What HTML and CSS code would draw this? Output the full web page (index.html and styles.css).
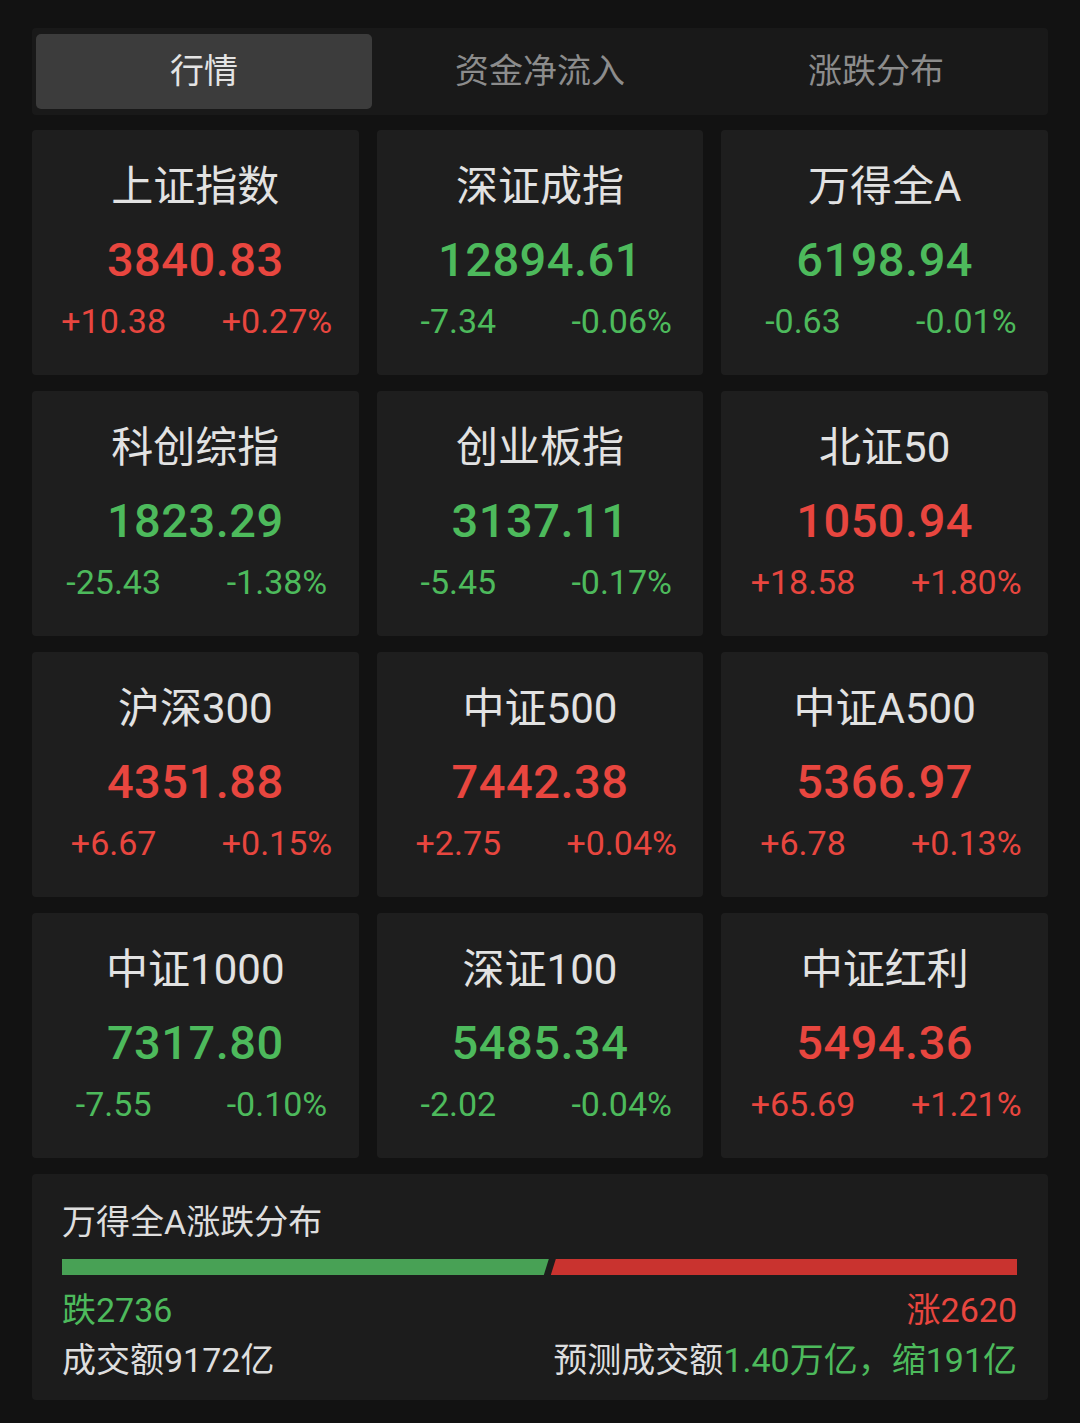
FILE: index.html
```html
<!DOCTYPE html>
<html lang="zh-CN">
<head>
<meta charset="utf-8">
<title>行情</title>
<link rel="stylesheet" href="styles.css">
</head>
<body>
<div class="page">
  <div class="tabs">
    <div class="tab active">行情</div>
    <div class="tab">资金净流入</div>
    <div class="tab">涨跌分布</div>
  </div>

  <div class="grid">
    <div class="card">
      <div class="name">上证指数</div>
      <div class="value up">3840.83</div>
      <div class="chg up"><span>+10.38</span><span>+0.27%</span></div>
    </div>
    <div class="card">
      <div class="name">深证成指</div>
      <div class="value down">12894.61</div>
      <div class="chg down"><span>-7.34</span><span>-0.06%</span></div>
    </div>
    <div class="card">
      <div class="name">万得全A</div>
      <div class="value down">6198.94</div>
      <div class="chg down"><span>-0.63</span><span>-0.01%</span></div>
    </div>

    <div class="card">
      <div class="name">科创综指</div>
      <div class="value down">1823.29</div>
      <div class="chg down"><span>-25.43</span><span>-1.38%</span></div>
    </div>
    <div class="card">
      <div class="name">创业板指</div>
      <div class="value down">3137.11</div>
      <div class="chg down"><span>-5.45</span><span>-0.17%</span></div>
    </div>
    <div class="card">
      <div class="name">北证50</div>
      <div class="value up">1050.94</div>
      <div class="chg up"><span>+18.58</span><span>+1.80%</span></div>
    </div>

    <div class="card">
      <div class="name">沪深300</div>
      <div class="value up">4351.88</div>
      <div class="chg up"><span>+6.67</span><span>+0.15%</span></div>
    </div>
    <div class="card">
      <div class="name">中证500</div>
      <div class="value up">7442.38</div>
      <div class="chg up"><span>+2.75</span><span>+0.04%</span></div>
    </div>
    <div class="card">
      <div class="name">中证A500</div>
      <div class="value up">5366.97</div>
      <div class="chg up"><span>+6.78</span><span>+0.13%</span></div>
    </div>

    <div class="card">
      <div class="name">中证1000</div>
      <div class="value down">7317.80</div>
      <div class="chg down"><span>-7.55</span><span>-0.10%</span></div>
    </div>
    <div class="card">
      <div class="name">深证100</div>
      <div class="value down">5485.34</div>
      <div class="chg down"><span>-2.02</span><span>-0.04%</span></div>
    </div>
    <div class="card">
      <div class="name">中证红利</div>
      <div class="value up">5494.36</div>
      <div class="chg up"><span>+65.69</span><span>+1.21%</span></div>
    </div>
  </div>

  <div class="dist">
    <div class="dist-title">万得全A涨跌分布</div>
    <div class="bar">
      <div class="bar-down"></div>
      <div class="bar-up"></div>
    </div>
    <div class="dist-row counts">
      <span class="down">跌2736</span>
      <span class="up">涨2620</span>
    </div>
    <div class="dist-row turnover">
      <span>成交额9172亿</span>
      <span>预测成交额<span class="down">1.40万亿，缩191亿</span></span>
    </div>
  </div>
</div>
</body>
</html>
```

FILE: styles.css
```css
* { box-sizing: border-box; }

html, body {
  margin: 0;
  padding: 0;
  background: #121212;
}

body {
  font-family: Roboto, "Noto Sans", "Noto Sans CJK SC", sans-serif;
  color: #dedede;
  width: 1080px;
  height: 1423px;
  overflow: hidden;
}

.page {
  padding: 28px 32px 0 32px;
}

.tabs {
  display: flex;
  height: 87px;
  background: #191919;
  padding: 6px 4px;
  border-radius: 4px;
}

.tab {
  flex: 1;
  display: flex;
  align-items: center;
  justify-content: center;
  padding-bottom: 6px;
  font-family: "Noto Sans CJK SC", sans-serif;
  font-size: 34px;
  color: #8c8c8c;
  border-radius: 5px;
}

.tab.active {
  background: #3c3c3c;
  color: #e4e4e4;
}

.grid {
  margin-top: 15px;
  display: grid;
  grid-template-columns: repeat(3, 1fr);
  grid-auto-rows: 245px;
  column-gap: 18px;
  row-gap: 16px;
}

.card {
  background: #1e1e1e;
  border-radius: 4px;
  display: flex;
  flex-direction: column;
  align-items: stretch;
  padding-top: 32px;
}

.name {
  text-align: center;
  font-family: Roboto, "Noto Sans CJK SC", sans-serif;
  font-size: 42px;
  line-height: 50px;
  color: #e2e2e2;
}

.value {
  margin-top: 18px;
  text-align: center;
  font-size: 47px;
  font-weight: 500;
  line-height: 60px;
  letter-spacing: 0.5px;
}

.chg {
  margin-top: 11px;
  display: flex;
  font-size: 34px;
  line-height: 40px;
}

.chg span {
  flex: 1;
  text-align: center;
}

.up { color: #e8463f; }
.down { color: #4dba5c; }

.dist {
  margin-top: 16px;
  height: 226px;
  background: #1c1c1c;
  border-radius: 4px;
  padding: 26px 31px 0 30px;
}

.dist-title {
  font-family: Roboto, "Noto Sans CJK SC", sans-serif;
  font-size: 34px;
  line-height: 44px;
  color: #dedede;
}

.bar {
  margin-top: 15px;
  height: 16px;
  display: flex;
  gap: 2px;
}

.bar-down {
  flex: 2736;
  background: #48a155;
  clip-path: polygon(0 0, 100% 0, calc(100% - 5px) 100%, 0 100%);
}

.bar-up {
  flex: 2620;
  background: #c9332f;
  clip-path: polygon(5px 0, 100% 0, 100% 100%, 0 100%);
}

.dist-row {
  display: flex;
  justify-content: space-between;
  font-family: Roboto, "Noto Sans CJK SC", sans-serif;
  font-size: 34px;
  line-height: 50px;
}

.counts {
  margin-top: 10px;
}

.turnover {
  color: #dedede;
}
```
